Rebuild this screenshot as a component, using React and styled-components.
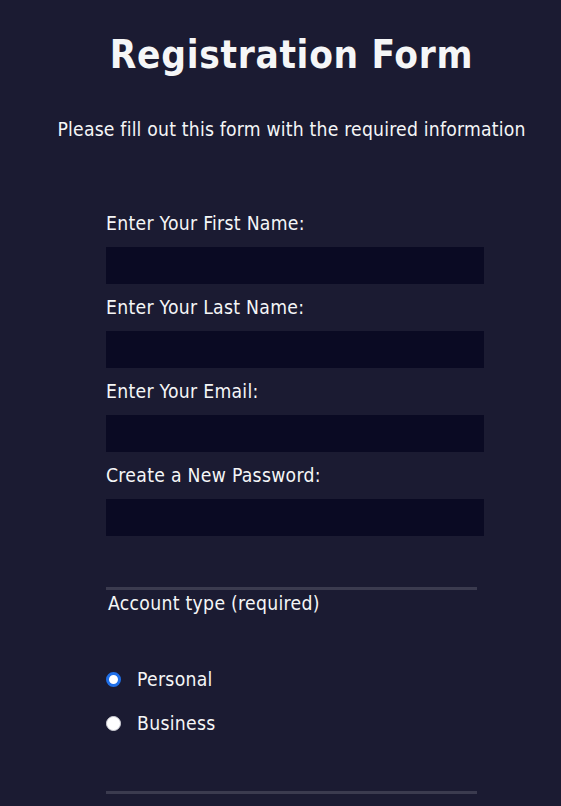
import React from 'react';
import styled, { createGlobalStyle } from 'styled-components';

const GlobalStyle = createGlobalStyle`
  html, body {
    margin: 0;
    padding: 0;
    background-color: #1b1b32;
    overflow-x: hidden;
  }
  * {
    box-sizing: border-box;
  }
`

const Page = styled.div`
  width: 100%;
  min-height: 806px;
  padding: 32px 0 40px 22px;
  color: #f5f6f7;
  font-family: "DejaVu Sans Condensed", "DejaVu Sans", Tahoma, sans-serif;
  font-stretch: condensed;
  letter-spacing: 0.3px;
`

const Title = styled.h1`
  margin: 0;
  font-size: 38.4px;
  line-height: 46px;
  font-weight: bold;
  letter-spacing: 0.7px;
  text-align: center;
`

const Subtitle = styled.p`
  margin: 40px 0 0 0;
  font-size: 19.2px;
  line-height: 23px;
  letter-spacing: 0.2px;
  text-align: center;
`

const Form = styled.form`
  width: 371px;
  margin: 71px auto 0 auto;
`

const Fieldset = styled.fieldset`
  border: none;
  margin: 0;
  min-width: 0;
  padding: ${props => props.$top || 0}px 0 ${props => props.$bottom || 0}px 0;
  border-bottom: 3px solid #3b3b4f;
  display: flex;
  flex-direction: column;
  gap: 12px;
`

const Label = styled.label`
  display: flex;
  flex-direction: column;
  align-items: flex-start;
  gap: 12px;
  font-size: 19.2px;
  line-height: 23px;
`

const Input = styled.input`
  width: 378px;
  height: 37px;
  margin: 0;
  flex-shrink: 0;
  background-color: #0a0a23;
  border: 1px solid #0a0a23;
  color: #ffffff;
`

const Legend = styled.div`
  font-size: 19.2px;
  line-height: 23px;
  padding: 2px 0 0 2px;
  margin-bottom: 53px;
`

const RadioList = styled.div`
  display: flex;
  flex-direction: column;
  gap: 21px;
`

const RadioRow = styled.label`
  display: flex;
  align-items: center;
  gap: 16px;
  font-size: 19.2px;
  line-height: 23px;
`

const Radio = styled.input`
  appearance: none;
  margin: 0;
  width: 15px;
  height: 15px;
  border-radius: 50%;
  background: #ffffff;
  border: 1px solid #d0d0d8;
  flex-shrink: 0;

  &:checked {
    border: 3.5px solid #1f6fe8;
  }
`

const fields = [
  'Enter Your First Name:',
  'Enter Your Last Name:',
  'Enter Your Email:',
  'Create a New Password:',
]

const App = () => {
  return (
    <Page>
      <GlobalStyle />
      <Title>Registration Form</Title>
      <Subtitle>Please fill out this form with the required information</Subtitle>
      <Form onSubmit={e => e.preventDefault()}>
        <Fieldset $bottom={51}>
          {fields.map(text => (
            <Label key={text}>
              {text}
              <Input type={text.includes('Password') ? 'password' : 'text'} />
            </Label>
          ))}
        </Fieldset>
        <Fieldset $bottom={56}>
          <div>
            <Legend>Account type (required)</Legend>
            <RadioList>
              <RadioRow>
                <Radio type='radio' name='account-type' defaultChecked />
                Personal
              </RadioRow>
              <RadioRow>
                <Radio type='radio' name='account-type' />
                Business
              </RadioRow>
            </RadioList>
          </div>
        </Fieldset>
      </Form>
    </Page>
  )
}
export default App;
